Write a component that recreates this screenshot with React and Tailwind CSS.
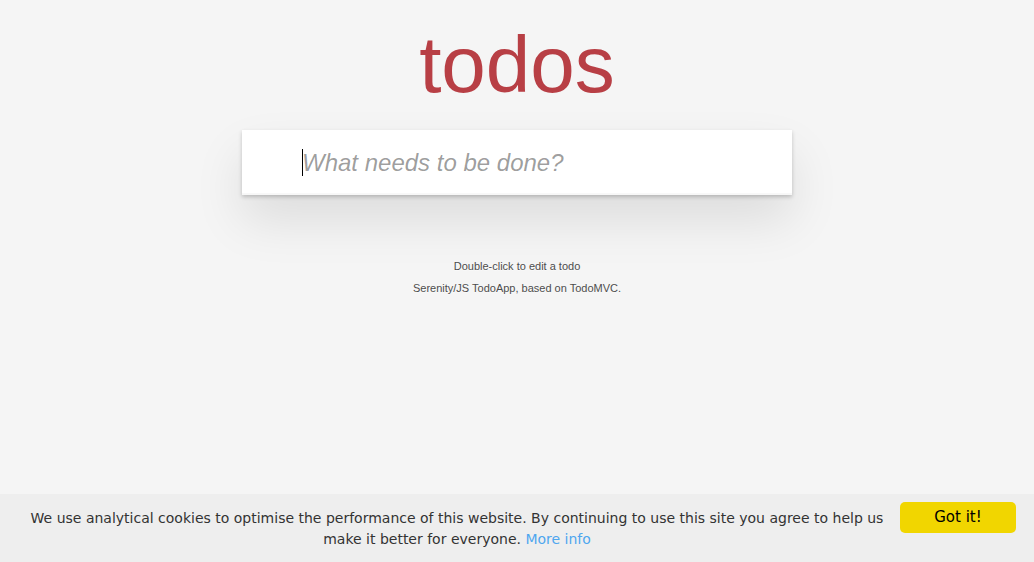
import React, { useState } from 'react';

const CookieBar = ({ onDismiss }) => (
  <div
    className="fixed inset-x-0 bottom-0 z-50 flex items-start bg-[#eeeeee] pt-[8px] pb-[12px] pl-[25px] pr-[18px] text-[#333333]"
    style={{ fontFamily: '"DejaVu Sans", Verdana, sans-serif' }}
  >
    <p className="mt-[6px] flex-1 text-center text-[14px] leading-[21px]">
      We use analytical cookies to optimise the performance of this website. By continuing to use
      this site you agree to help us make it better for everyone.{' '}
      <a href="#" className="text-[#4ea6ee]">More info</a>
    </p>
    <button
      onClick={onDismiss}
      className="ml-[11px] h-[31px] w-[116px] rounded-[5px] bg-[#f1d600] text-[15px] text-black"
    >
      Got it!
    </button>
  </div>
);

export default function App() {
  const [text, setText] = useState('');
  const [showCookies, setShowCookies] = useState(true);

  return (
    <div
      className="min-h-screen bg-[#f5f5f5] text-[#4d4d4d]"
      style={{ fontFamily: '"Liberation Sans", Arial, sans-serif' }}
    >
      {/* Todo app */}
      <section className="mx-auto w-[550px]">
        <h1 className="pt-[25px] text-center text-[80px] leading-[80px] text-[#b83f45]">todos</h1>
        <div className="relative mt-[25px] bg-white shadow-[0_2px_4px_0_rgba(0,0,0,0.2),0_25px_50px_0_rgba(0,0,0,0.1)]">
          <input
            value={text}
            onChange={(e) => setText(e.target.value)}
            placeholder="What needs to be done?"
            className="block h-[65px] w-full bg-transparent py-4 pr-4 pl-[60px] text-[24px] caret-transparent outline-none placeholder:italic placeholder:text-[rgba(0,0,0,0.4)] shadow-[inset_0_-2px_1px_rgba(0,0,0,0.03)]"
          />
          {!text && <span className="pointer-events-none absolute top-[19px] left-[60px] h-[27px] w-px bg-black" />}
        </div>
      </section>

      {/* Info */}
      <footer className="mt-[66px] text-center text-[11px] leading-none text-shadow-[0_1px_0_rgba(255,255,255,0.5)]">
        <p>Double-click to edit a todo</p>
        <p className="mt-[11px]">Serenity/JS TodoApp, based on TodoMVC.</p>
      </footer>

      {showCookies && <CookieBar onDismiss={() => setShowCookies(false)} />}
    </div>
  );
}
